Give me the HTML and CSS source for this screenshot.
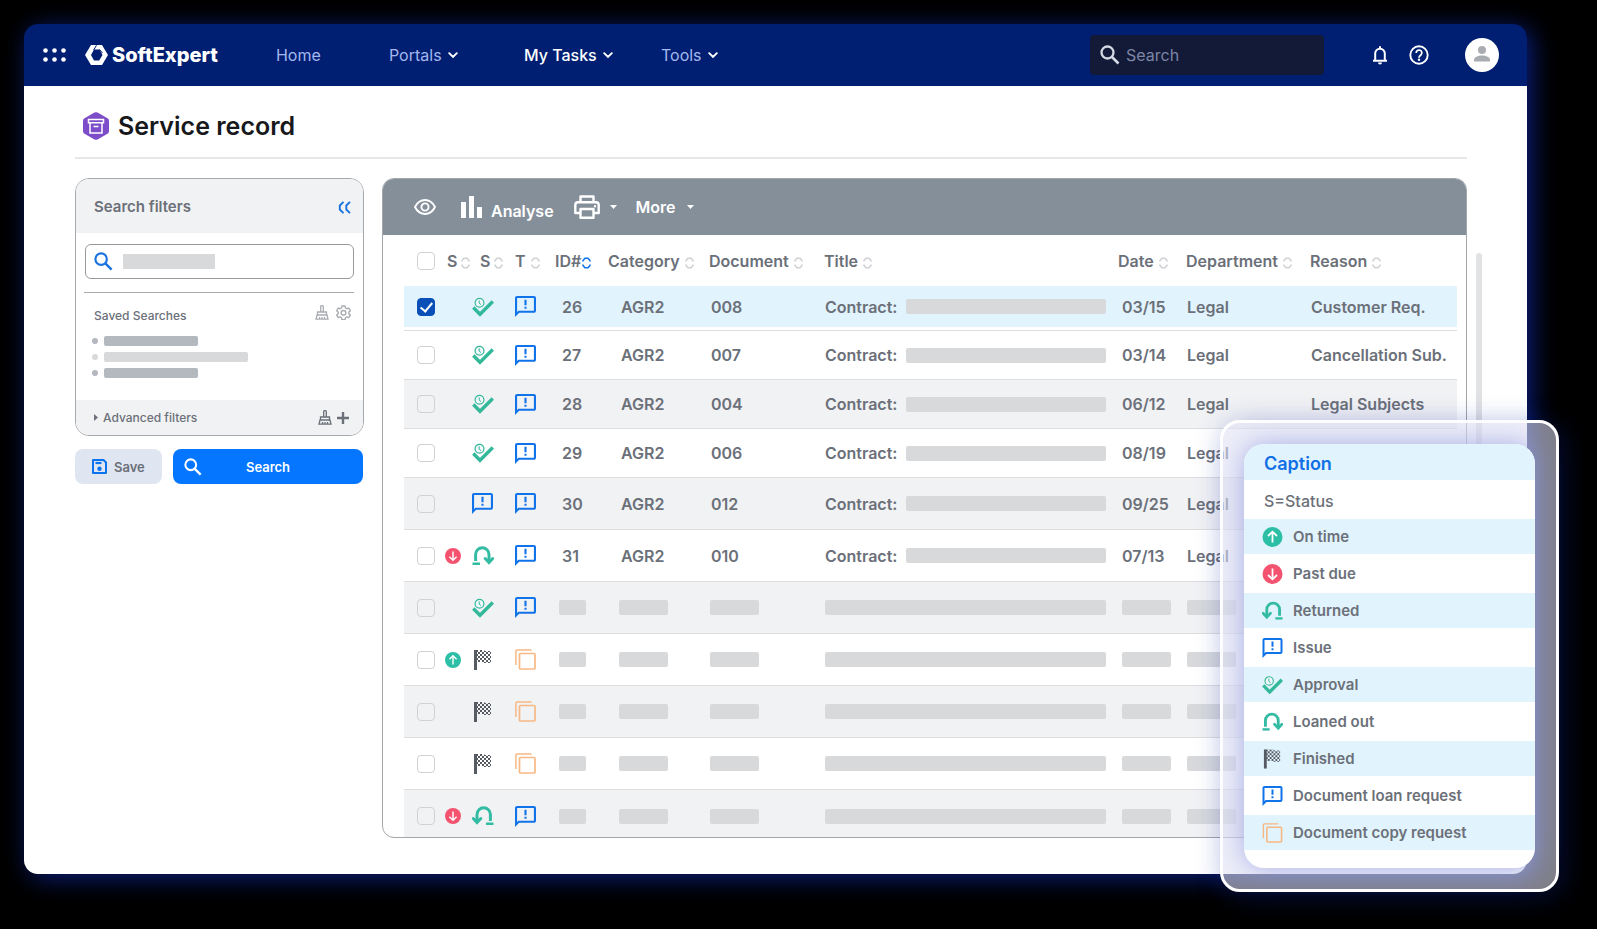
FILE: index.html
```html
<!DOCTYPE html>
<html lang="en">
<head>
  <meta charset="UTF-8" />
  <title>Service record - SoftExpert</title>
  <link rel="stylesheet" href="styles.css">
</head>
<body>
  <!-- icon sprite -->
  <svg class="sprite" width="0" height="0" aria-hidden="true">
    <defs>
      <pattern id="checker" width="4" height="4" patternUnits="userSpaceOnUse">
        <path d="M0 0h2v2H0zM2 2h2v2H2z" fill="#565b63" />
      </pattern>
    </defs>
    <symbol id="i-search" viewBox="0 0 20 20">
      <circle cx="7.5" cy="7.5" r="6" fill="none" stroke="currentColor" stroke-width="2.3" />
      <path d="M12 12l6.5 6.5" stroke="currentColor" stroke-width="2.6" />
    </symbol>
    <symbol id="i-chevron" viewBox="0 0 10 7">
      <path d="M1.2 1.2L5 5l3.8-3.8" fill="none" stroke="currentColor" stroke-width="1.9" stroke-linecap="round" />
    </symbol>
    <symbol id="i-sort" viewBox="0 0 9 12">
      <path d="M1 4.5V3.500L3 1.200h3L8 3.500v1M1 7.500v1l2 2.300h3L8 8.500v-1" fill="none" stroke="currentColor" stroke-width="1.6" />
    </symbol>
    <symbol id="i-issue" viewBox="2 2 20 20">
      <path d="M20 2H4c-1.1 0-2 .9-2 2v18l4-4h14c1.1 0 2-.9 2-2V4c0-1.1-.9-2-2-2zm0 14H5.200L4 17.200V4h16zM11 12.200h2v2h-2zM11 5.500h2v5.300h-2z" fill="#1173ea" />
    </symbol>
    <symbol id="i-approval" viewBox="0 0 22 20">
      <path d="M1.300 10.500L8 17.300 20.800 4.500" fill="none" stroke="#33b89a" stroke-width="3.4" />
      <circle cx="7.5" cy="5.8" r="5.5" class="cutout" />
      <circle cx="7.5" cy="5.8" r="4.4" fill="none" stroke="#33b89a" stroke-width="1.2" />
      <path d="M7.200 3.400v2.800l1.800 1.400" fill="none" stroke="#33b89a" stroke-width="1" />
    </symbol>
    <symbol id="i-returned" viewBox="0 0 22 20">
      <path d="M5 15V8.500a6.700 6.700 0 0 1 13.400 0V15" fill="none" stroke="#33bca3" stroke-width="3" />
      <path d="M1.300 12.500L5 16.500l3.800-4" fill="none" stroke="#33bca3" stroke-width="3" stroke-linecap="round" />
      <path d="M14 16.500h7.500V19H14z" fill="#33bca3" />
    </symbol>
    <symbol id="i-loaned" viewBox="0 0 22 20">
      <path d="M3.600 15V8.500a6.700 6.700 0 0 1 13.400 0V15" fill="none" stroke="#33bca3" stroke-width="3" />
      <path d="M13.200 12.500l3.800 4 3.700-4" fill="none" stroke="#33bca3" stroke-width="3" stroke-linecap="round" />
      <path d="M.5 16.500H8V19H.5z" fill="#33bca3" />
    </symbol>
    <symbol id="i-flag" viewBox="0 0 22 20">
      <path d="M2 0h3v20H2z" fill="#565b63" />
      <path d="M4 0h8l1 1h6v12h-7l-1-1H4z" fill="url(#checker)" />
    </symbol>
    <symbol id="i-copy" viewBox="0 0 21 21">
      <path d="M.9 16V2Q.9.900 2 .900h14.500" fill="none" stroke="#f7b983" stroke-width="1.5" />
      <rect x="4.5" y="4.5" width="15.5" height="15.5" rx="1" fill="none" stroke="#f7b983" stroke-width="1.7" />
    </symbol>
    <symbol id="i-up" viewBox="0 0 20 20">
      <circle cx="10" cy="10" r="10" fill="#2cbfa6" />
      <path d="M10 15.500V5M5.500 9L10 4.700 14.500 9" fill="none" stroke="#fff" stroke-width="1.8" />
    </symbol>
    <symbol id="i-down" viewBox="0 0 20 20">
      <circle cx="10" cy="10" r="10" fill="#f4536f" />
      <path d="M10 4.500V15M5.500 11l4.500 4.300 4.500-4.300" fill="none" stroke="#fff" stroke-width="1.8" />
    </symbol>
    <symbol id="i-broom" viewBox="0 0 14 15">
      <path d="M5.700 7V1.500Q5.700.7 7 .7t1.300.8V7M2.500 10V7h9v3M1 14.200l1-4.200h10l1 4.200zM4.500 14v-2M7 14v-2M9.500 14v-2" fill="none" stroke="currentColor" stroke-width="1.3" />
    </symbol>
    <symbol id="i-gear" viewBox="0 0 24 24">
      <path d="M9.500 1.500h5l.6 3.200 2.300 1.300 3.100-1.100 2.500 4.300-2.500 2.100v2.500l2.500 2.100-2.500 4.300-3.100-1.100-2.300 1.300-.6 3.200h-5l-.6-3.200-2.300-1.300-3.100 1.100L1 15.900l2.500-2.100v-2.500L1 9.200l2.500-4.300L6.600 6l2.300-1.300z" fill="none" stroke="currentColor" stroke-width="2.2" stroke-linejoin="round" />
      <circle cx="12" cy="12.5" r="3.8" fill="none" stroke="currentColor" stroke-width="2.2" />
    </symbol>
  </svg>

  <div class="app">
    <header class="topbar">
      <button class="icon-btn" aria-label="Apps">
        <svg width="23" height="14" viewBox="0 0 23 14" fill="#fff">
          <circle cx="2.5" cy="2.5" r="2.3" /><circle cx="11.5" cy="2.5" r="2.3" /><circle cx="20.5" cy="2.5" r="2.3" />
          <circle cx="2.5" cy="11.5" r="2.3" /><circle cx="11.5" cy="11.5" r="2.3" /><circle cx="20.5" cy="11.5" r="2.3" />
        </svg>
      </button>
      <a class="logo" href="#">
        <svg width="23" height="20" viewBox="0 0 23 20">
          <path d="M6 0h11l6 10-6 10H6L0 10z" fill="#fff" />
          <path d="M9 4.500h5.500L17.500 10l-3.300 5.500H9L6 10z" fill="#011f72" />
          <path d="M8.700 5L11.500.2M14.500 4.500l3 3.500" stroke="#011f72" stroke-width="1" />
        </svg>
        SoftExpert
      </a>
      <nav class="menu">
        <a href="#">Home</a>
        <a href="#">Portals <svg width="10" height="7"><use href="#i-chevron" /></svg></a>
        <a href="#" class="active">My Tasks <svg width="10" height="7"><use href="#i-chevron" /></svg></a>
        <a href="#">Tools <svg width="10" height="7"><use href="#i-chevron" /></svg></a>
      </nav>
      <label class="top-search">
        <svg width="20" height="20"><use href="#i-search" /></svg>
        <input type="text" placeholder="Search" aria-label="Search">
      </label>
      <button class="icon-btn" aria-label="Notifications">
        <svg width="16" height="20" viewBox="0 0 16 20">
          <path d="M3.200 15.500V8.500a4.800 4.800 0 0 1 9.600 0v7M1 15.800h14M8 3.500V1.200" fill="none" stroke="#fff" stroke-width="2" />
          <path d="M6 17.500h4a2 2 0 0 1-4 0z" fill="#fff" />
        </svg>
      </button>
      <button class="icon-btn help" aria-label="Help">
        <svg width="20" height="20" viewBox="0 0 20 20">
          <circle cx="10" cy="10" r="8.7" fill="none" stroke="#fff" stroke-width="1.9" />
          <path d="M7.200 8a2.800 2.800 0 1 1 4.600 2c-1.200.9-1.800 1.400-1.800 2.700" fill="none" stroke="#fff" stroke-width="1.8" />
          <circle cx="10" cy="14.8" r="1.2" fill="#fff" />
        </svg>
      </button>
      <button class="icon-btn avatar" aria-label="Account">
        <svg width="34" height="34" viewBox="0 0 34 34">
          <circle cx="17" cy="17" r="17" fill="#fff" />
          <circle cx="17" cy="12" r="4" fill="#a9acb0" />
          <path d="M9 23.500v-1.500c0-2.800 4-4.500 8-4.500s8 1.700 8 4.500v1.500z" fill="#a9acb0" />
        </svg>
      </button>
    </header>

    <main class="content">
      <div class="page-title">
        <svg width="26" height="28" viewBox="0 0 26 28">
          <path d="M11.500.6q1.500-.9 3 0l10 5.700q1.500.9 1.500 2.500v10.400q0 1.600-1.500 2.500l-10 5.700q-1.500.9-3 0l-10-5.700Q0 20.800 0 19.200V8.800q0-1.600 1.500-2.500z" fill="#7d4cc8" />
          <path d="M5.500 7.500h15v3.200h-15zM7 11v10h12V11M10.500 14.500h5" fill="none" stroke="#fff" stroke-width="1.5" />
        </svg>
        <h1>Service record</h1>
      </div>

      <div class="columns">
        <aside class="sidebar">
          <section class="filters">
            <div class="filters-head">
              <h2>Search filters</h2>
              <button class="icon-btn collapse" aria-label="Collapse">
                <svg width="13" height="13" viewBox="0 0 13 13"><path d="M5.500.8L1.800 4.500v4l3.700 3.700M12 .8L8.300 4.500v4l3.700 3.700" fill="none" stroke="#1a73e0" stroke-width="1.9" /></svg>
              </button>
            </div>
            <label class="filter-input">
              <svg width="19" height="19"><use href="#i-search" /></svg>
              <input type="text" aria-label="Filter">
            </label>
            <div class="saved">
              <div class="saved-head">
                <h3>Saved Searches</h3>
                <svg width="14" height="15"><use href="#i-broom" /></svg>
                <svg width="15" height="15"><use href="#i-gear" /></svg>
              </div>
              <ul>
                <li><span class="bar"></span></li>
                <li class="light"><span class="bar"></span></li>
                <li><span class="bar"></span></li>
              </ul>
            </div>
            <div class="advanced">
              <svg width="4" height="7" viewBox="0 0 4 7"><path d="M0 0l4 3.500L0 7z" fill="currentColor" /></svg>
              <span>Advanced filters</span>
              <svg width="14" height="15"><use href="#i-broom" /></svg>
              <svg width="12" height="12" viewBox="0 0 12 12"><path d="M6 0v12M0 6h12" stroke="currentColor" stroke-width="2.4" /></svg>
            </div>
          </section>
          <div class="actions">
            <button class="save">
              <svg width="15" height="15" viewBox="0 0 15 15">
                <path d="M1 1h10.500L14 3.500V14H1z" fill="none" stroke="#0b72f0" stroke-width="2" stroke-linejoin="round" />
                <path d="M3.500 4h6" stroke="#0b72f0" stroke-width="2.2" /><circle cx="7.5" cy="9.8" r="2.2" fill="#0b72f0" />
              </svg>
              Save
            </button>
            <button class="search">
              <svg width="18" height="18"><use href="#i-search" /></svg>
              <span>Search</span>
            </button>
          </div>
        </aside>

        <section class="panel">
          <div class="toolbar">
            <button aria-label="View">
              <svg width="22" height="16" viewBox="0 0 22 16" fill="none" stroke="#fff"><path d="M1 8Q4.500 1 11 1t10 7q-3.500 7-10 7T1 8z" stroke-width="1.9" /><circle cx="11" cy="8" r="3.6" stroke-width="1.9" /></svg>
            </button>
            <button class="analyse">
              <svg width="22" height="22" viewBox="0 0 22 22" fill="#fff"><path d="M0 6h5v16H0zM8 0h5v22H8zM16 11h5v11h-5z" /></svg>
              <span>Analyse</span>
            </button>
            <button class="print" aria-label="Print">
              <svg width="26" height="24" viewBox="0 0 26 24" fill="none" stroke="#fff" stroke-width="2.4"><path d="M6.500 7V1.500h13V7M6.500 18H1.300V10Q1.300 7.200 4 7.200h18q2.700 0 2.700 2.800v8h-5.200M6.500 14h13v8.700h-13z" stroke-linejoin="round" /><circle cx="21" cy="11.2" r=".6" stroke-width="1.2" /></svg>
              <svg width="7" height="4" viewBox="0 0 7 4"><path d="M0 0h7L3.500 4z" fill="#fff" /></svg>
            </button>
            <button class="more">
              More
              <svg width="7" height="4" viewBox="0 0 7 4"><path d="M0 0h7L3.500 4z" fill="#fff" /></svg>
            </button>
          </div>

          <table class="records">
            <colgroup>
              <col class="c-check"><col class="c-s1"><col class="c-s2"><col class="c-type"><col class="c-id"><col class="c-cat">
              <col class="c-doc"><col class="c-title"><col class="c-date"><col class="c-dept"><col class="c-reason">
            </colgroup>
            <thead>
              <tr>
                <th><input type="checkbox" aria-label="Select all"></th>
                <th class="s1">S <svg><use href="#i-sort" /></svg></th>
                <th class="s2">S <svg><use href="#i-sort" /></svg></th>
                <th>T<svg><use href="#i-sort" /></svg></th>
                <th class="sorted">ID#<svg><use href="#i-sort" /></svg></th>
                <th>Category<svg><use href="#i-sort" /></svg></th>
                <th>Document<svg><use href="#i-sort" /></svg></th>
                <th>Title<svg><use href="#i-sort" /></svg></th>
                <th>Date<svg><use href="#i-sort" /></svg></th>
                <th>Department<svg><use href="#i-sort" /></svg></th>
                <th>Reason<svg><use href="#i-sort" /></svg></th>
              </tr>
            </thead>
            <tbody>
              <tr class="selected">
                <td><input type="checkbox" aria-label="Select 26" checked></td>
                <td></td>
                <td><svg class="status"><use href="#i-approval" /></svg></td>
                <td><svg class="type"><use href="#i-issue" /></svg></td>
                <td>26</td><td>AGR2</td><td>008</td>
                <td><div class="title">Contract: <span class="bar"></span></div></td>
                <td>03/15</td><td>Legal</td><td>Customer Req.</td>
              </tr>
              <tr>
                <td><input type="checkbox" aria-label="Select 27"></td>
                <td></td>
                <td><svg class="status"><use href="#i-approval" /></svg></td>
                <td><svg class="type"><use href="#i-issue" /></svg></td>
                <td>27</td><td>AGR2</td><td>007</td>
                <td><div class="title">Contract: <span class="bar"></span></div></td>
                <td>03/14</td><td>Legal</td><td>Cancellation Sub.</td>
              </tr>
              <tr>
                <td><input type="checkbox" aria-label="Select 28"></td>
                <td></td>
                <td><svg class="status"><use href="#i-approval" /></svg></td>
                <td><svg class="type"><use href="#i-issue" /></svg></td>
                <td>28</td><td>AGR2</td><td>004</td>
                <td><div class="title">Contract: <span class="bar"></span></div></td>
                <td>06/12</td><td>Legal</td><td>Legal Subjects</td>
              </tr>
              <tr>
                <td><input type="checkbox" aria-label="Select 29"></td>
                <td></td>
                <td><svg class="status"><use href="#i-approval" /></svg></td>
                <td><svg class="type"><use href="#i-issue" /></svg></td>
                <td>29</td><td>AGR2</td><td>006</td>
                <td><div class="title">Contract: <span class="bar"></span></div></td>
                <td>08/19</td><td>Legal</td><td></td>
              </tr>
              <tr class="tall">
                <td><input type="checkbox" aria-label="Select 30"></td>
                <td></td>
                <td><svg class="type"><use href="#i-issue" /></svg></td>
                <td><svg class="type"><use href="#i-issue" /></svg></td>
                <td>30</td><td>AGR2</td><td>012</td>
                <td><div class="title">Contract: <span class="bar"></span></div></td>
                <td>09/25</td><td>Legal</td><td></td>
              </tr>
              <tr class="tall">
                <td><input type="checkbox" aria-label="Select 31"></td>
                <td><svg class="due"><use href="#i-down" /></svg></td>
                <td><svg class="status"><use href="#i-loaned" /></svg></td>
                <td><svg class="type"><use href="#i-issue" /></svg></td>
                <td>31</td><td>AGR2</td><td>010</td>
                <td><div class="title">Contract: <span class="bar"></span></div></td>
                <td>07/13</td><td>Legal</td><td></td>
              </tr>
              <tr class="tall blank">
                <td><input type="checkbox" aria-label="Select row"></td>
                <td></td>
                <td><svg class="status"><use href="#i-approval" /></svg></td>
                <td><svg class="type"><use href="#i-issue" /></svg></td>
                <td><span class="bar"></span></td><td><span class="bar"></span></td><td><span class="bar"></span></td>
                <td><div class="title"><span class="bar"></span></div></td>
                <td><span class="bar"></span></td><td><span class="bar"></span></td><td></td>
              </tr>
              <tr class="tall blank">
                <td><input type="checkbox" aria-label="Select row"></td>
                <td><svg class="due"><use href="#i-up" /></svg></td>
                <td><svg class="status"><use href="#i-flag" /></svg></td>
                <td><svg class="type"><use href="#i-copy" /></svg></td>
                <td><span class="bar"></span></td><td><span class="bar"></span></td><td><span class="bar"></span></td>
                <td><div class="title"><span class="bar"></span></div></td>
                <td><span class="bar"></span></td><td><span class="bar"></span></td><td></td>
              </tr>
              <tr class="tall blank">
                <td><input type="checkbox" aria-label="Select row"></td>
                <td></td>
                <td><svg class="status"><use href="#i-flag" /></svg></td>
                <td><svg class="type"><use href="#i-copy" /></svg></td>
                <td><span class="bar"></span></td><td><span class="bar"></span></td><td><span class="bar"></span></td>
                <td><div class="title"><span class="bar"></span></div></td>
                <td><span class="bar"></span></td><td><span class="bar"></span></td><td></td>
              </tr>
              <tr class="tall blank">
                <td><input type="checkbox" aria-label="Select row"></td>
                <td></td>
                <td><svg class="status"><use href="#i-flag" /></svg></td>
                <td><svg class="type"><use href="#i-copy" /></svg></td>
                <td><span class="bar"></span></td><td><span class="bar"></span></td><td><span class="bar"></span></td>
                <td><div class="title"><span class="bar"></span></div></td>
                <td><span class="bar"></span></td><td><span class="bar"></span></td><td></td>
              </tr>
              <tr class="last blank">
                <td><input type="checkbox" aria-label="Select row"></td>
                <td><svg class="due"><use href="#i-down" /></svg></td>
                <td><svg class="status"><use href="#i-returned" /></svg></td>
                <td><svg class="type"><use href="#i-issue" /></svg></td>
                <td><span class="bar"></span></td><td><span class="bar"></span></td><td><span class="bar"></span></td>
                <td><div class="title"><span class="bar"></span></div></td>
                <td><span class="bar"></span></td><td><span class="bar"></span></td><td></td>
              </tr>
            </tbody>
          </table>
        </section>
        <div class="scrollbar"></div>
      </div>
    </main>

    <div class="legend">
      <div class="legend-card">
        <h2>Caption</h2>
        <p>S=Status</p>
        <ul>
          <li><svg><use href="#i-up" /></svg>On time</li>
          <li><svg><use href="#i-down" /></svg>Past due</li>
          <li><svg><use href="#i-returned" /></svg>Returned</li>
          <li><svg><use href="#i-issue" /></svg>Issue</li>
          <li><svg><use href="#i-approval" /></svg>Approval</li>
          <li><svg><use href="#i-loaned" /></svg>Loaned out</li>
          <li><svg><use href="#i-flag" /></svg>Finished</li>
          <li><svg><use href="#i-issue" /></svg>Document loan request</li>
          <li><svg><use href="#i-copy" /></svg>Document copy request</li>
        </ul>
      </div>
    </div>
  </div>
</body>
</html>
```
FILE: styles.css
```css
* {
  box-sizing: border-box;
}

body {
  margin: 0;
  padding: 24px 70px 56px 24px;
  background: #000;
  color: #6b7079;
  font-family: Inter, "Liberation Sans", sans-serif;
  font-size: 16px;
  line-height: 20px;
}

h1, h2, h3, p, ul {
  margin: 0;
  padding: 0;
}

ul {
  list-style: none;
}

a {
  color: inherit;
  text-decoration: none;
}

button, input {
  font: inherit;
  color: inherit;
  margin: 0;
  padding: 0;
  border: 0;
  background: none;
}

svg {
  display: block;
  flex: none;
}

.sprite {
  position: absolute;
}

.bar {
  display: block;
  height: 15px;
  border-radius: 2px;
  background: #d7d9db;
}

.app {
  position: relative;
  border-radius: 14px;
  box-shadow: 5px 4px 24px #0b1f7c;
}

/* top bar */
.topbar {
  display: flex;
  align-items: center;
  height: 62px;
  padding: 0 28px 0 19px;
  background: #011f72;
  border-radius: 14px 14px 0 0;
}

.icon-btn {
  display: block;
  flex: none;
}

.logo {
  display: flex;
  align-items: center;
  gap: 4px;
  margin-left: 19px;
  color: #fff;
  font-size: 20px;
  font-weight: 800;
}

.menu {
  display: grid;
  grid-template-columns: 113px 135px 137px auto;
  margin-left: 58px;
  color: #a3b8ee;
}

.menu a {
  display: flex;
  align-items: center;
  gap: 6px;
}

.menu svg {
  color: #fff;
}

.menu .active {
  color: #fff;
  font-weight: 500;
}

.top-search {
  display: flex;
  align-items: center;
  gap: 6px;
  width: 234px;
  height: 40px;
  margin-left: auto;
  margin-right: 48px;
  padding-left: 10px;
  background: #121a37;
  border-radius: 4px;
  color: #d5d9e4;
}

.top-search input {
  flex: 1;
  min-width: 0;
}

.top-search input::placeholder {
  color: #7d86a6;
}

.help {
  margin-left: 21px;
}

.avatar {
  margin-left: 36px;
}

/* page */
.content {
  padding: 0 45px 36px 51px;
  background: #fff;
  border-radius: 0 0 14px 14px;
}

.page-title {
  display: flex;
  align-items: center;
  gap: 9px;
  height: 73px;
  margin-right: 15px;
  padding: 8px 8px 0;
  border-bottom: 2px solid #e6e7e9;
}

.page-title h1 {
  color: #17181b;
  font-size: 25px;
  font-weight: 600;
  line-height: 32px;
}

.columns {
  display: flex;
  margin-top: 19px;
}

.sidebar {
  width: 289px;
  flex: none;
}

.filters {
  border: 1px solid #a6a9ad;
  border-radius: 14px;
  overflow: hidden;
}

.filters-head {
  display: flex;
  align-items: center;
  justify-content: space-between;
  height: 54px;
  padding: 2px 12px 0 18px;
  background: #f1f2f3;
}

.filters-head h2 {
  font-size: 15px;
  font-weight: 600;
}

.filter-input {
  display: flex;
  align-items: center;
  gap: 10px;
  height: 35px;
  margin: 11px 9px 0;
  padding-left: 8px;
  border: 1px solid #96999e;
  border-radius: 6px;
  color: #1a73e0;
}

.filter-input input {
  flex: 1;
  min-width: 0;
  background: linear-gradient(#d7d9db, #d7d9db) 0 center / 92px 15px no-repeat;
}

.saved {
  height: 108px;
  margin: 13px 9px 0 8px;
  border-top: 1px solid #a6a9ad;
}

.saved-head {
  display: flex;
  align-items: center;
  gap: 7px;
  padding: 7px 3px 0 10px;
  color: #a9acb0;
}

.saved-head h3 {
  flex: 1;
  padding-top: 8px;
  color: #6b7079;
  font-size: 12px;
  font-weight: 500;
  line-height: 16px;
}

.saved ul {
  display: grid;
  gap: 6px;
  margin-top: 12px;
  padding-left: 8px;
}

.saved li {
  display: flex;
  align-items: center;
  gap: 6px;
}

.saved li::before {
  content: "";
  width: 6px;
  height: 6px;
  border-radius: 50%;
  background: #b4b8bf;
}

.saved .bar {
  width: 94px;
  height: 10px;
  background: #b4b8bf;
}

.saved .light .bar {
  width: 144px;
}

.saved .light::before, .saved .light .bar {
  background: #d7d9db;
}

.advanced {
  display: flex;
  align-items: center;
  gap: 5px;
  height: 35px;
  padding: 0 14px 0 18px;
  background: #f1f2f3;
  font-size: 12px;
  font-weight: 500;
}

.advanced span {
  flex: 1;
}

.actions {
  display: flex;
  gap: 11px;
  margin-top: 13px;
  font-size: 13px;
  font-weight: 600;
}

.actions button {
  display: flex;
  align-items: center;
  height: 35px;
  border-radius: 8px;
}

.save {
  gap: 7px;
  width: 87px;
  padding-left: 17px;
  background: #dfe6f1;
}

.search {
  flex: 1;
  margin-right: 1px;
  padding: 0 29px 0 11px;
  background: #0576ff;
  color: #fff;
}

.search span {
  flex: 1;
}

/* records panel */
.panel {
  flex: 1;
  min-width: 0;
  margin-left: 18px;
  border: 1px solid #a3a7ac;
  border-radius: 12px;
  overflow: hidden;
}

.toolbar {
  display: flex;
  align-items: center;
  height: 56px;
  padding-left: 31px;
  background: #848f9a;
  color: #fff;
  font-weight: 600;
}

.toolbar button {
  display: flex;
  align-items: center;
}

.analyse {
  gap: 8px;
  margin-left: 25px;
}

.analyse span {
  padding-top: 8px;
}

.print {
  gap: 10px;
  margin-left: 20px;
}

.more {
  gap: 11px;
  margin-left: 19px;
}

.records {
  width: calc(100% - 30px);
  margin-left: 21px;
  table-layout: fixed;
  border-collapse: separate;
  border-spacing: 0;
}

.c-check { width: 39px; }
.c-s1 { width: 29px; }
.c-s2 { width: 43px; }
.c-type { width: 40px; }
.c-id { width: 53px; }
.c-cat { width: 101px; }
.c-doc { width: 115px; }
.c-date { width: 68px; }
.c-dept { width: 124px; }
.c-reason { width: 147px; }

.records th {
  height: 51px;
  padding: 0;
  font-weight: 600;
  text-align: left;
  white-space: nowrap;
}

.records th svg {
  display: inline-block;
  width: 9px;
  height: 12px;
  margin-left: 5px;
  vertical-align: -2px;
  color: #cfd1d4;
}

.records .s1 {
  padding-left: 4px;
}

.records .s2 {
  padding-left: 8px;
}

.records .s1 svg, .records .s2 svg {
  margin-left: 0;
}

.records .sorted svg {
  margin-left: 1px;
  color: #1173ea;
}

.records td {
  height: 49px;
  padding: 0;
  border-bottom: 1px solid #dcdee0;
  font-weight: 600;
  white-space: nowrap;
}

.records .tall td {
  height: 52px;
}

.records .last td {
  height: 47px;
  padding-top: 5px;
  border-bottom: 0;
}

.records tbody tr:nth-child(odd) td {
  background: #f1f2f4;
}

.records tbody tr.selected:first-child td {
  height: 45px;
  padding-bottom: 3px;
  background: linear-gradient(#e1f3fd 41px, #fff 41px);
}

.records td:nth-child(5) { padding-left: 7px; }
.records td:nth-child(6) { padding-left: 13px; }
.records td:nth-child(7) { padding-left: 2px; }
.records td:nth-child(8) { padding-left: 1px; }
.records td:nth-child(9) { padding-left: 4px; }
.records td:nth-child(10), .records td:nth-child(11) { padding-left: 1px; }

.records .blank td:nth-child(5) { padding-left: 4px; }
.records .blank td:nth-child(6) { padding-left: 11px; }
.records .blank td:nth-child(7) { padding-left: 1px; }

.records td > .bar {
  width: 49px;
}

.records td:nth-child(5) > .bar {
  width: 27px;
}

.records input {
  display: block;
  appearance: none;
  width: 18px;
  height: 18px;
  margin-left: 13px;
  border: 1px solid #cfd1d5;
  border-radius: 4px;
}

.records input:checked {
  border-color: #0a4fb8;
  background: #0a4fb8;
}

.records input:checked::after {
  content: "";
  display: block;
  width: 5px;
  height: 10px;
  margin: 1px auto 0;
  border: solid #fff;
  border-width: 0 2px 2px 0;
  transform: rotate(40deg);
}

.title {
  display: flex;
  align-items: center;
  gap: 9px;
  padding-right: 12px;
}

.title .bar {
  flex: 1;
}

.due {
  width: 16px;
  height: 16px;
  margin-left: 2px;
}

.status {
  width: 22px;
  height: 20px;
}

.type {
  width: 21px;
  height: 21px;
}

.cutout {
  fill: #f1f7fa;
}

.scrollbar {
  width: 6px;
  margin: 75px 0 0 9px;
  border-radius: 3px;
  background: #e1e2e4;
}

/* status legend floating over the window corner */
.legend {
  position: absolute;
  right: -32px;
  bottom: -18px;
  width: 339px;
  padding: 21px;
  border: 3px solid #fff;
  border-radius: 20px;
  background: rgba(225, 225, 245, 0.57);
  box-shadow: 4px 4px 28px rgba(15, 40, 160, 0.35);
}

.legend-card {
  padding-bottom: 18px;
  border-radius: 20px;
  background: #fff;
  box-shadow: 0 0 26px rgba(135, 148, 220, 0.7);
  overflow: hidden;
}

.legend h2 {
  padding: 3px 20px 0;
  background: #e1f3fd;
  color: #0f6fe6;
  font-size: 18px;
  font-weight: 600;
  line-height: 33px;
}

.legend p {
  padding: 3px 20px 0;
  font-weight: 500;
  line-height: 36px;
}

.legend li {
  display: flex;
  align-items: center;
  gap: 10px;
  height: 39px;
  padding-left: 18px;
  font-size: 15px;
  font-weight: 600;
}

.legend li:nth-child(odd) {
  height: 35px;
  background: #e1f3fd;
}

.legend svg {
  width: 21px;
  height: 20px;
}
```
